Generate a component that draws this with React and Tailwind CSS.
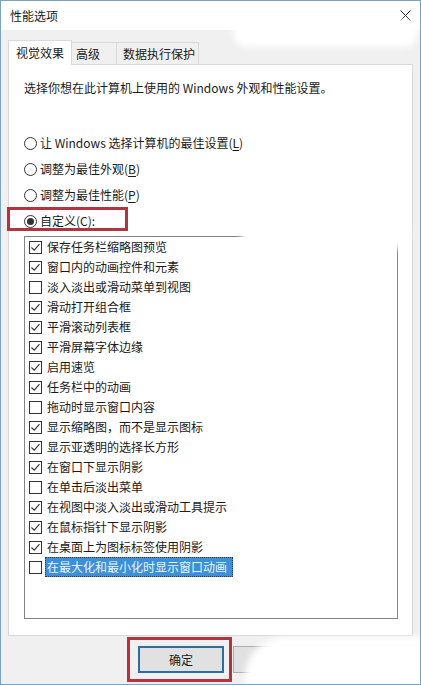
import React from 'react';

const radios = [
  { label: '让 Windows 选择计算机的最佳设置', key: 'L' },
  { label: '调整为最佳外观', key: 'B' },
  { label: '调整为最佳性能', key: 'P' },
];

const effects = [
  { label: '保存任务栏缩略图预览', on: true },
  { label: '窗口内的动画控件和元素', on: true },
  { label: '淡入淡出或滑动菜单到视图', on: false },
  { label: '滑动打开组合框', on: true },
  { label: '平滑滚动列表框', on: true },
  { label: '平滑屏幕字体边缘', on: true },
  { label: '启用速览', on: true },
  { label: '任务栏中的动画', on: true },
  { label: '拖动时显示窗口内容', on: false },
  { label: '显示缩略图，而不是显示图标', on: true },
  { label: '显示亚透明的选择长方形', on: true },
  { label: '在窗口下显示阴影', on: true },
  { label: '在单击后淡出菜单', on: false },
  { label: '在视图中淡入淡出或滑动工具提示', on: true },
  { label: '在鼠标指针下显示阴影', on: true },
  { label: '在桌面上为图标标签使用阴影', on: true },
  { label: '在最大化和最小化时显示窗口动画', on: false, focused: true },
];

const Radio = ({ checked }) => (
  <span className="w-[13px] h-[13px] rounded-full border border-[#333] bg-white flex items-center justify-center shrink-0">
    {checked && <span className="w-[7px] h-[7px] rounded-full bg-[#333]" />}
  </span>
);

const Checkbox = ({ checked }) => (
  <span className="w-[13px] h-[13px] border border-[#333] bg-white shrink-0 flex items-center justify-center">
    {checked && (
      <svg width="11" height="11" viewBox="0 0 11 11">
        <path d="M1.5 5.5 L4.2 8.2 L9.5 2.2" fill="none" stroke="#333" strokeWidth="1.1" />
      </svg>
    )}
  </span>
);

const App = () => {
  return (
    <div className="relative w-[421px] h-[685px] overflow-hidden border border-[#7da2c1] bg-[#f0f0f0] flex flex-col font-['Noto_Sans_CJK_SC',sans-serif] text-[12px] leading-[16px] text-[#1a1a1a]">
      {/* title bar */}
      <div className="h-[29px] bg-white flex items-center justify-between pl-[9px] pr-[9px] shrink-0">
        <span>性能选项</span>
        <svg width="11" height="11" viewBox="0 0 11 11">
          <path d="M0.5 0.5 L10.5 10.5 M10.5 0.5 L0.5 10.5" stroke="#111" strokeWidth="1" />
        </svg>
      </div>

      <div className="flex-1 flex flex-col px-[7px] pt-[10px]">
        {/* tabs */}
        <div className="flex items-end h-[24px]">
          <div className="relative z-10 -mb-px h-[25px] w-[64px] bg-white border-l border-t border-r border-[#d9d9d9] flex items-start pt-[4px] pl-[7px]">
            视觉效果
          </div>
          <div className="h-[22px] w-[45px] border-t border-r border-[#d9d9d9] flex items-center pl-[4px]">
            高级
          </div>
          <div className="h-[22px] w-[82px] border-t border-r border-[#d9d9d9] flex items-center pl-[6px]">
            数据执行保护
          </div>
        </div>

        {/* panel */}
        <div className="h-[572px] bg-white border border-[#d9d9d9] pl-[15px] pt-[15px]">
          <p>选择你想在此计算机上使用的 Windows 外观和性能设置。</p>

          <div className="mt-[34px] flex flex-col">
            {radios.map((r) => (
              <label key={r.key} className="h-[26px] flex items-center gap-[3px]">
                <Radio checked={false} />
                <span>
                  {r.label}(<u className="underline-offset-2">{r.key}</u>)
                </span>
              </label>
            ))}
            <label className="relative h-[26px] flex items-center gap-[3px]">
              <Radio checked />
              <span>
                自定义(<u className="underline-offset-2">C</u>):
              </span>
              <span className="absolute left-[-17px] top-[-1px] w-[121px] h-[24px] border-[3px] border-[#b3343f]" />
            </label>
          </div>

          {/* effects list */}
          <div className="mt-[2px] w-[374px] h-[383px] border border-[#828282] pl-[4px]">
            {effects.map((e) => (
              <div key={e.label} className="h-[20px] flex items-center">
                <Checkbox checked={e.on} />
                <span
                  className={
                    e.focused
                      ? 'ml-[3px] h-[20px] flex items-center px-[2px] pr-[6px] bg-[#3d8fd9] text-[#e8f6ff] outline outline-1 outline-dotted outline-[#1d3f63] -outline-offset-1'
                      : 'ml-[5px]'
                  }
                >
                  {e.label}
                </span>
              </div>
            ))}
          </div>
        </div>

        {/* buttons */}
        <div className="flex items-start pt-[1px] pl-[119px]">
          <div className="border-[3px] border-[#b3343f] pl-[8px] pr-[5px] pt-[6px] pb-[6px]">
            <button className="w-[86px] h-[27px] bg-[#e1e1e1] border-2 border-[#2a6fa0] flex items-center justify-center">
              确定
            </button>
          </div>
          <div className="mt-[9px] ml-px w-[86px] h-[27px] bg-[#e1e1e1] border border-[#adadad]" />
        </div>
      </div>

      {/* white smudges over the dialog */}
      <div className="absolute left-[232px] top-[18px] w-[185px] h-[28px] rounded-full bg-white blur-[3px]" />
      <div className="absolute left-[240px] top-[220px] w-[168px] h-[28px] rounded-full bg-white blur-[3px]" />
      <div className="absolute left-[244px] top-[636px] w-[180px] h-[52px] rounded-tl-[40px] bg-white blur-[3px]" />
    </div>
  );
};

export default App;
